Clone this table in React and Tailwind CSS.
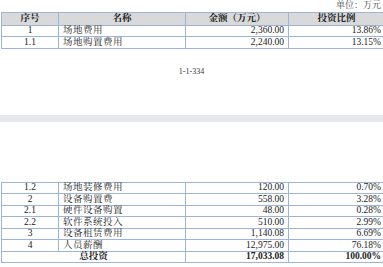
import React from "react";

const font = { fontFamily: '"Liberation Serif", "Noto Serif CJK SC", "Noto Sans CJK SC", serif' };

const top = [
  ["1", "场地费用", "2,360.00", "13.86%"],
  ["1.1", "场地购置费用", "2,240.00", "13.15%"],
];
const bottom = [
  ["1.2", "场地装修费用", "120.00", "0.70%"],
  ["2", "设备购置费", "558.00", "3.28%"],
  ["2.1", "硬件设备购置", "48.00", "0.28%"],
  ["2.2", "软件系统投入", "510.00", "2.99%"],
  ["3", "设备租赁费用", "1,140.08", "6.69%"],
  ["4", "人员薪酬", "12,975.00", "76.18%"],
];

const cell = "border-r border-b border-[#9db3da] flex items-center leading-none";

function Row({ r, h = "h-[11.5px]" }) {
  return (
    <>
      <div className={`${cell} ${h} justify-center`}>{r[0]}</div>
      <div className={`${cell} ${h} pl-[4px] tracking-[0.5px]`}>{r[1]}</div>
      <div className={`${cell} ${h} justify-end pr-[4px]`}>{r[2]}</div>
      <div className={`${cell} ${h} justify-end pr-[3px]`}>{r[3]}</div>
    </>
  );
}

export default function App() {
  return (
    <div className="w-[383px] h-[267px] overflow-hidden bg-white text-[9.5px] text-[#222]" style={font}>
      <div className="h-[12px] flex items-center justify-end pr-[2px] text-[9px] text-[#444]">单位：万元</div>
      <div className="ml-[1px] w-[384px] grid grid-cols-[57px_127px_103px_1fr] border-t border-l border-[#9db3da]">
        <div className={`${cell} h-[12.5px] justify-center bg-[#d9d9d9] font-bold`}>序号</div>
        <div className={`${cell} h-[12.5px] justify-center bg-[#d9d9d9] font-bold`}>名称</div>
        <div className={`${cell} h-[12.5px] justify-center bg-[#d9d9d9] font-bold`}>金额（万元）</div>
        <div className={`${cell} h-[12.5px] justify-center bg-[#d9d9d9] font-bold`}>投资比例</div>
        {top.map((r) => (
          <Row key={r[0]} r={r} />
        ))}
      </div>
      <div className="mt-[17px] text-center text-[8px] text-[#333]">1-1-334</div>
      <div className="mt-[37px] h-[7px] bg-[#e7e8ed]" />
      <div className="mt-[60px] ml-[1px] w-[384px] grid grid-cols-[57px_127px_103px_1fr] border-t border-l border-[#9db3da]">
        {bottom.map((r) => (
          <Row key={r[0]} r={r} />
        ))}
        <div className={`${cell} h-[11.5px] col-span-2 justify-center font-bold`}>总投资</div>
        <div className={`${cell} h-[11.5px] justify-end pr-[4px] font-bold`}>17,033.08</div>
        <div className={`${cell} h-[11.5px] justify-end pr-[3px] font-bold`}>100.00%</div>
      </div>
    </div>
  );
}
